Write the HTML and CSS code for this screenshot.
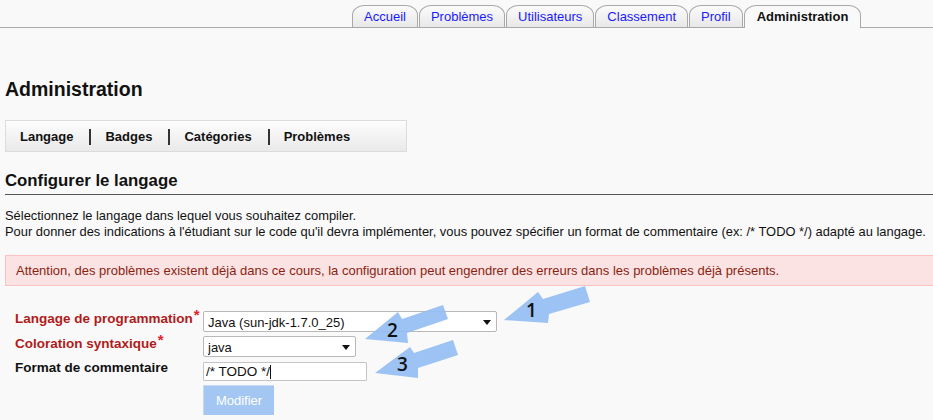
FILE: index.html
```html
<!DOCTYPE html>
<html lang="fr">
<head>
<meta charset="utf-8">
<title>Administration</title>
<link rel="stylesheet" href="styles.css">
</head>
<body>
<div class="page">
  <ul class="tabs">
    <li><a class="tab" href="#">Accueil</a></li>
    <li><a class="tab" href="#">Problèmes</a></li>
    <li><a class="tab" href="#">Utilisateurs</a></li>
    <li><a class="tab" href="#">Classement</a></li>
    <li><a class="tab" href="#">Profil</a></li>
    <li><a class="tab active" href="#">Administration</a></li>
  </ul>

  <div class="content">
    <h1 class="title">Administration</h1>

    <nav class="subnav">
      <a href="#">Langage</a><span class="sep"></span>
      <a href="#">Badges</a><span class="sep"></span>
      <a href="#">Catégories</a><span class="sep"></span>
      <a href="#">Problèmes</a>
    </nav>

    <h2 class="section">Configurer le langage</h2>

    <p class="intro">Sélectionnez le langage dans lequel vous souhaitez compiler.<br>Pour donner des indications à l'étudiant sur le code qu'il devra implémenter, vous pouvez spécifier un format de commentaire (ex: /* TODO */) adapté au langage.</p>

    <div class="error">Attention, des problèmes existent déjà dans ce cours, la configuration peut engendrer des erreurs dans les problèmes déjà présents.</div>

    <form class="form">
      <div class="row">
        <label class="lbl req">Langage de programmation<span class="star">*</span></label>
        <span class="selwrap w1">
          <select class="sel"><option>Java (sun-jdk-1.7.0_25)</option></select>
          <svg class="caret" width="8" height="5" viewBox="0 0 8 5"><path d="M0 0H8L4 5Z" fill="#111"/></svg>
        </span>
      </div>
      <div class="row">
        <label class="lbl req">Coloration syntaxique<span class="star">*</span></label>
        <span class="selwrap w2">
          <select class="sel"><option>java</option></select>
          <svg class="caret" width="8" height="5" viewBox="0 0 8 5"><path d="M0 0H8L4 5Z" fill="#111"/></svg>
        </span>
      </div>
      <div class="row">
        <label class="lbl">Format de commentaire</label>
        <span class="inputwrap"><input class="txt" type="text" value="/* TODO */"><span class="cursor"></span></span>
      </div>
      <div class="row">
        <span class="lbl"></span>
        <button class="btn" type="button">Modifier</button>
      </div>
    </form>
    <div class="footnote">Configuration</div>
  </div>

  <svg class="arrows" width="933" height="420" viewBox="0 0 933 420">
    <g fill="#95bef3" fill-opacity="0.92">
      <polygon points="504,320 538,292 543,299 585,286 590,302 549,314 548,323"/>
      <polygon points="365,339 398,312 402,319 443,305 448,319 407,333 408,343"/>
      <polygon points="375,373 410,347 414,353 453,340 458,355 418,368 418,378"/>
    </g>
    <g class="num">
      <text x="526" y="317">1</text>
      <text x="387" y="337">2</text>
      <text x="397" y="371">3</text>
    </g>
  </svg>
</div>
</body>
</html>
```

FILE: styles.css
```css
* { box-sizing: border-box; }

html, body {
  margin: 0;
  padding: 0;
  background: #f9f9f9;
  overflow: hidden;
}

body {
  font-family: "Liberation Sans", Arial, sans-serif;
  font-size: 13px;
  color: #111;
}

.page {
  position: relative;
  width: 933px;
  height: 420px;
  overflow: hidden;
}

/* Top tabs */
.tabs {
  list-style: none;
  margin: 5px 0 0 0;
  padding: 0 0 0 352px;
  display: flex;
  gap: 1px;
  border-bottom: 1px solid #a9a9a9;
  height: 23px;
}

.tab {
  display: block;
  height: 22px;
  padding: 3px 11px 0;
  line-height: 16px;
  font-size: 13px;
  color: #1a1aff;
  text-decoration: none;
  border: 1px solid #a9a9a9;
  border-bottom: none;
  border-radius: 12px 12px 0 0 / 10px 10px 0 0;
  background: linear-gradient(#fbfbfb, #e8e8e8);
}

.tab.active {
  color: #111;
  font-weight: bold;
  background: #f9f9f9;
  height: 23px;
  padding: 3px 12px 0;
}

.content {
  padding-left: 5px;
}

.title {
  margin: 50px 0 0;
  font-size: 19.5px;
  line-height: 22px;
  font-weight: bold;
  color: #111;
}

.subnav {
  margin-top: 20px;
  width: 402px;
  height: 32px;
  border: 1px solid #dcdcdc;
  background: linear-gradient(#fdfdfd, #e9e9e9);
  padding: 2px 0 0 14px;
  display: flex;
  align-items: center;
  line-height: 28px;
}

.subnav a {
  font-size: 13px;
  font-weight: bold;
  color: #111;
  text-decoration: none;
}

.sep {
  display: inline-block;
  width: 2px;
  height: 16px;
  background: #333;
  margin: 0 14px 0 16px;
}

.section {
  margin: 19px 0 0;
  font-size: 16.8px;
  line-height: 20px;
  font-weight: bold;
  color: #111;
  padding-bottom: 3px;
  border-bottom: 1px solid #555;
}

.intro {
  margin: 13px 0 0;
  line-height: 16px;
  font-size: 12.9px;
  white-space: nowrap;
}

.error {
  margin: 15px -4px 0 0;
  padding: 7px 10px 6px;
  line-height: 16px;
  border: 1px solid #fbc2c4;
  background: #fbe3e4;
  color: #8a1f11;
  font-size: 13px;
  white-space: nowrap;
}

.form {
  margin-top: 25px;
  padding-left: 10px;
}

.row {
  display: grid;
  grid-template-columns: 188px auto;
  align-items: start;
  margin-bottom: 4px;
}

.lbl {
  font-size: 13.5px;
  font-weight: bold;
  line-height: 16px;
  color: #111;
  margin-top: -1px;
  white-space: nowrap;
}

.lbl.req {
  color: #b01b1b;
}

.star {
  color: #e5232a;
  font-size: 15px;
  position: relative;
  top: -3px;
  margin-left: 1px;
}

.selwrap {
  position: relative;
  display: inline-block;
  height: 21px;
}

.selwrap.w1 { width: 294px; }
.selwrap.w2 { width: 153px; }

.sel {
  appearance: none;
  -webkit-appearance: none;
  width: 100%;
  height: 21px;
  border: 1px solid #b8b8b8;
  border-radius: 2px;
  background: #fff;
  font-family: "Liberation Sans", Arial, sans-serif;
  font-size: 13px;
  color: #111;
  padding: 1px 16px 0 4px;
  margin: 0;
}

.caret {
  position: absolute;
  right: 6px;
  top: 9px;
  pointer-events: none;
}

.inputwrap {
  position: relative;
  display: inline-block;
  width: 164px;
  height: 19px;
  margin-top: 1px;
}

.txt {
  width: 100%;
  height: 19px;
  border: 1px solid #c4c4c4;
  border-radius: 1px;
  background: #fff;
  font-family: "Liberation Sans", Arial, sans-serif;
  font-size: 13.5px;
  color: #111;
  padding: 0 2px;
  margin: 0;
  outline: none;
}

.cursor {
  position: absolute;
  left: 67px;
  top: 3px;
  width: 1px;
  height: 14px;
  background: #111;
}

.btn {
  width: 71px;
  height: 30px;
  border: none;
  border-top: 1px solid #c6daf6;
  border-left: 1px solid #c6daf6;
  background: #a4c6f2;
  color: #fff;
  font-family: "Liberation Sans", Arial, sans-serif;
  font-size: 13px;
  padding: 0;
}

.footnote {
  margin-top: -1px;
  padding-left: 861px;
  color: #c00;
  font-size: 12px;
  line-height: 14px;
  white-space: nowrap;
}

.arrows {
  position: absolute;
  left: 0;
  top: 0;
  pointer-events: none;
}

.num text {
  font-family: "Open Sans", "DejaVu Sans", sans-serif;
  font-size: 19px;
  font-weight: 600;
  fill: #111;
}
```
